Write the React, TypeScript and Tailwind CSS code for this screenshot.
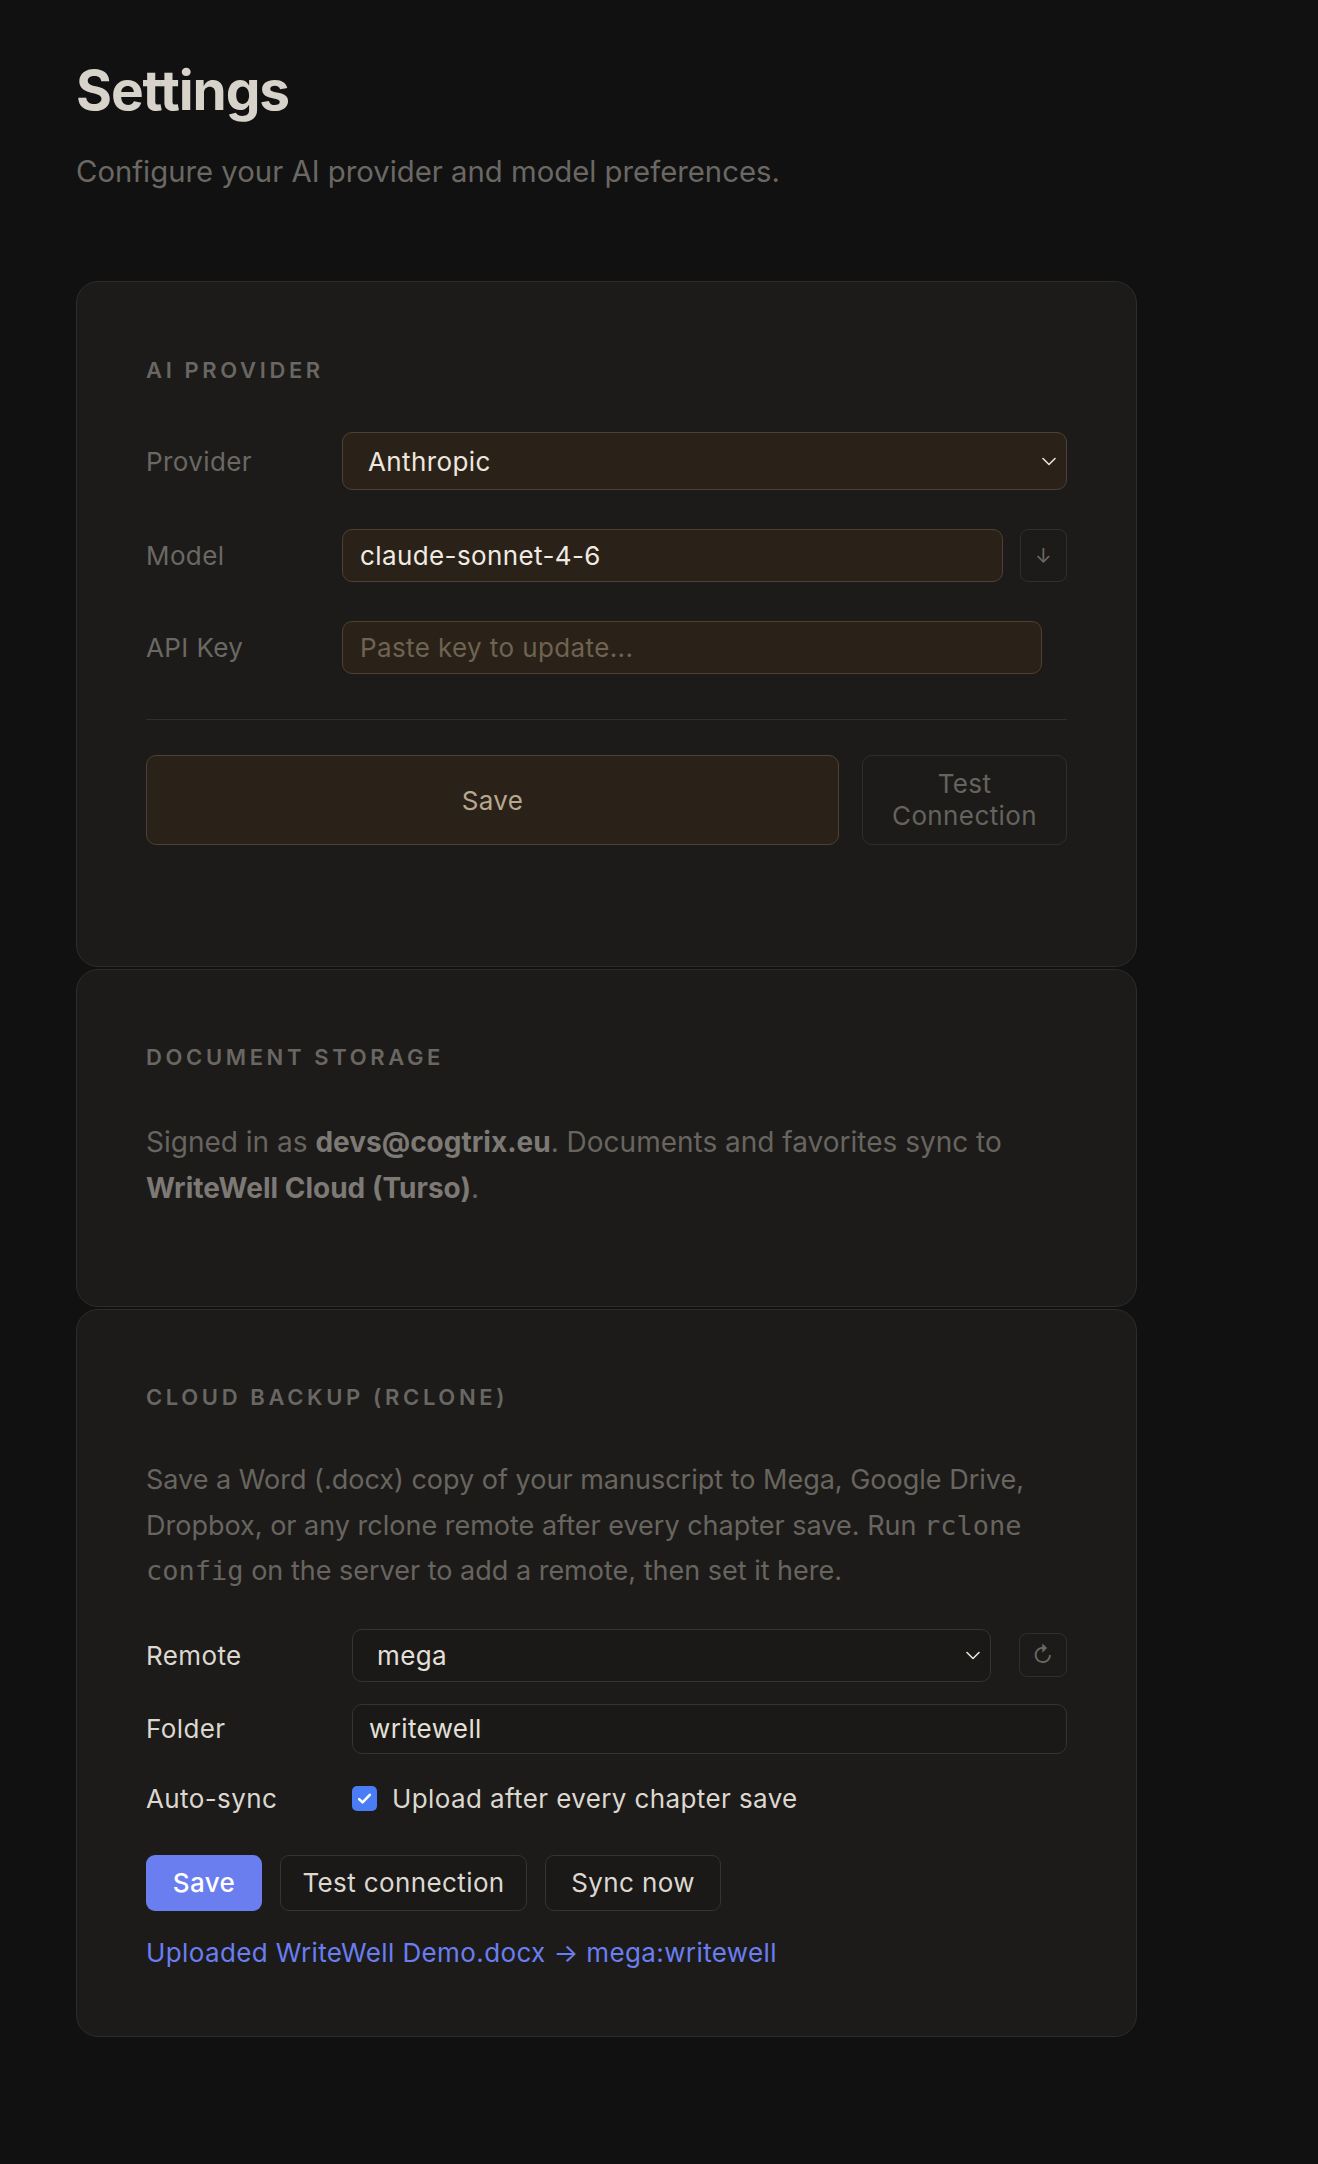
import React from "react";

function Chevron() {
  return (
    <svg width="14" height="9" viewBox="0 0 14 9" fill="none" className="shrink-0">
      <path d="M1 1.5l6 6 6-6" stroke="#e8e3da" strokeWidth="1.6" strokeLinecap="round" strokeLinejoin="round" />
    </svg>
  );
}

function SectionTitle({ children }: { children: React.ReactNode }) {
  return (
    <h2 className="text-[22px] leading-[33px] font-semibold uppercase tracking-[0.165em] text-[#6a6763]">
      {children}
    </h2>
  );
}

export default function App() {
  return (
    <div className="min-h-screen bg-[#111111] px-[76px] pt-[57px] pb-[130px] font-['Inter','Noto_Sans',sans-serif]">
      <h1 className="text-[55px] leading-[66px] font-bold tracking-[-0.02em] text-[#d7d3cb]">Settings</h1>
      <p className="mt-[28px] text-[29.3px] leading-[42px] text-[#6b6864]">
        Configure your AI provider and model preferences.
      </p>

      <div className="mt-[88px] w-[1061px] text-[26px] tracking-[0.015em]">
        {/* AI provider */}
        <section className="rounded-[22px] border border-[#2d2c2a] bg-[#1c1b1a] px-[69px] pt-[72px] pb-[121px]">
          <SectionTitle>AI Provider</SectionTitle>

          <div className="mt-[45px] flex items-center">
            <label className="w-[196px] shrink-0 text-[#6b6864]">Provider</label>
            <div className="flex h-[58px] flex-1 items-center justify-between rounded-[10px] border border-[#4e412f] bg-[#2a2219] pl-[25px] pr-[10px]">
              <span className="text-[#ede7dd]">Anthropic</span>
              <Chevron />
            </div>
          </div>

          <div className="mt-[39px] flex items-center">
            <label className="w-[196px] shrink-0 text-[#6b6864]">Model</label>
            <input
              defaultValue="claude-sonnet-4-6"
              className="h-[53px] flex-1 rounded-[10px] border border-[#4e412f] bg-[#2a2219] px-[17px] text-[#f0ebe2] outline-none"
            />
            <button className="ml-[17px] flex h-[53px] w-[47px] items-center justify-center rounded-[8px] border border-[#302f2d] text-[20px] text-[#6b6864]">
              ↓
            </button>
          </div>

          <div className="mt-[39px] flex items-center">
            <label className="w-[196px] shrink-0 text-[#6b6864]">API Key</label>
            <input
              placeholder="Paste key to update..."
              className="mr-[25px] h-[53px] flex-1 rounded-[10px] border border-[#4e412f] bg-[#2a2219] px-[17px] text-[#f0ebe2] outline-none placeholder:text-[#6f6351]"
            />
          </div>

          <div className="mt-[45px] h-px bg-[#302f2d]" />

          <div className="mt-[35px] flex gap-[23px]">
            <button className="h-[90px] flex-1 rounded-[10px] border border-[#4e412f] bg-[#2a2219] text-[#b8a78f]">
              Save
            </button>
            <button className="h-[90px] w-[205px] rounded-[10px] border border-[#2f2e2c] px-[20px] leading-[32px] text-[#66635e]">
              Test Connection
            </button>
          </div>
        </section>

        {/* Document storage */}
        <section className="mt-[2px] rounded-[22px] border border-[#2d2c2a] bg-[#1c1b1a] px-[69px] pt-[71px] pb-[95px]">
          <SectionTitle>Document Storage</SectionTitle>
          <p className="mt-[46px] text-[28px] leading-[45.5px] tracking-normal text-[#68655f]">
            Signed in as <strong className="font-bold text-[#7d7974]">devs@cogtrix.eu</strong>. Documents and favorites sync to{" "}
            <strong className="font-bold text-[#7d7974]">WriteWell Cloud (Turso)</strong>.
          </p>
        </section>

        {/* Cloud backup */}
        <section className="mt-[2px] rounded-[22px] border border-[#2d2c2a] bg-[#1c1b1a] px-[69px] pt-[71px] pb-[65px]">
          <SectionTitle>Cloud Backup (rclone)</SectionTitle>
          <p className="mt-[43px] text-[27px] leading-[45.5px] tracking-normal text-[#68655f]">
            Save a Word (.docx) copy of your manuscript to Mega, Google Drive, Dropbox, or any rclone remote after every
            chapter save. Run <code className="font-['DejaVu_Sans_Mono',monospace] text-[27px]">rclone config</code> on the
            server to add a remote, then set it here.
          </p>

          <div className="mt-[35px] flex items-center">
            <label className="w-[206px] shrink-0 text-[#dcd8d0]">Remote</label>
            <div className="flex h-[53px] flex-1 items-center justify-between rounded-[10px] border border-[#353432] bg-[#1a1918] pl-[24px] pr-[10px]">
              <span className="text-[#e4e0d8]">mega</span>
              <Chevron />
            </div>
            <button className="ml-[28px] flex h-[44px] w-[48px] items-center justify-center rounded-[8px] border border-[#302f2d] text-[22px] text-[#6b6864]">
              ↻
            </button>
          </div>

          <div className="mt-[22px] flex items-center">
            <label className="w-[206px] shrink-0 text-[#dcd8d0]">Folder</label>
            <input
              defaultValue="writewell"
              className="h-[50px] flex-1 rounded-[10px] border border-[#353432] bg-[#1a1918] px-[16px] text-[#e4e0d8] outline-none"
            />
          </div>

          <div className="mt-[26px] flex h-[37px] items-center">
            <label className="w-[206px] shrink-0 text-[#dcd8d0]">Auto-sync</label>
            <span className="flex h-[25px] w-[25px] items-center justify-center rounded-[5px] bg-[#4a7cf6]">
              <svg width="17" height="17" viewBox="0 0 16 16" fill="none">
                <path d="M3 8.5l3.2 3.2L13 4.5" stroke="#fff" strokeWidth="2.4" strokeLinecap="round" strokeLinejoin="round" />
              </svg>
            </span>
            <span className="ml-[15px] text-[#dcd8d0]">Upload after every chapter save</span>
          </div>

          <div className="mt-[38px] flex gap-[18px]">
            <button className="h-[56px] w-[116px] rounded-[9px] bg-[#6a7ef0] font-medium text-white">Save</button>
            <button className="h-[56px] w-[247px] rounded-[9px] border border-[#353432] bg-[#1a1918] text-[#dcd8d0]">
              Test connection
            </button>
            <button className="h-[56px] w-[176px] rounded-[9px] border border-[#353432] bg-[#1a1918] text-[#dcd8d0]">
              Sync now
            </button>
          </div>

          <p className="mt-[23px] leading-[37px] text-[#6a7ef0]">Uploaded WriteWell Demo.docx → mega:writewell</p>
        </section>
      </div>
    </div>
  );
}
